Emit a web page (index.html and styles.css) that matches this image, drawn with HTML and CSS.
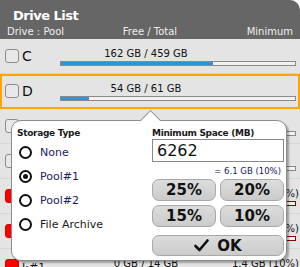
FILE: index.html
```html
<!DOCTYPE html>
<html lang="en">
  <head>
    <meta charset="utf-8" />
    <title>Drive List</title>
    <link rel="stylesheet" href="styles.css">
  </head>
  <body>
    <div class="panel">
      <div class="head">
        <div class="title">Drive List</div>
        <div class="cols">
          <span>Drive : Pool</span>
          <span class="c-free">Free / Total</span>
          <span class="c-min">Minimum</span>
        </div>
      </div>
      <div class="rows">
        <div class="row">
          <span class="check"></span>
          <span class="drive">C</span>
          <div class="info">
            <div class="line"><span class="free">162 GB / 459 GB</span><span class="min"></span></div>
            <div class="bar"><div class="fill" style="width: 65%"></div></div>
          </div>
        </div>
        <div class="row sel">
          <span class="check"></span>
          <span class="drive">D</span>
          <div class="info">
            <div class="line"><span class="free">54 GB / 61 GB</span><span class="min"></span></div>
            <div class="bar"><div class="fill" style="width: 12%"></div></div>
          </div>
        </div>
        <div class="row">
          <span class="check"></span>
          <span class="drive">E</span>
          <div class="info">
            <div class="line"><span class="free"></span><span class="min"></span></div>
            <div class="bar"><div class="fill" style="width: 40%"></div></div>
          </div>
        </div>
        <div class="row">
          <span class="check"></span>
          <span class="drive">F</span>
          <div class="info">
            <div class="line"><span class="free">12 GB / 32 GB</span><span class="min"></span></div>
            <div class="bar"><div class="fill" style="width: 60%"></div></div>
          </div>
        </div>
        <div class="row pool">
          <span class="check"></span>
          <span class="drive">G:#1</span>
          <div class="info">
            <div class="line"><span class="free">3 GB / 14 GB</span><span class="min">1.4 GB (10%)</span></div>
            <div class="bar"><div class="fill" style="width: 78%"></div></div>
          </div>
        </div>
        <div class="row pool">
          <span class="check"></span>
          <span class="drive">H:#1</span>
          <div class="info">
            <div class="line"><span class="free">2 GB / 14 GB</span><span class="min">1.4 GB (10%)</span></div>
            <div class="bar"><div class="fill" style="width: 85%"></div></div>
          </div>
        </div>
        <div class="row pool">
          <span class="check"></span>
          <span class="drive">I:#1</span>
          <div class="info">
            <div class="line"><span class="free">0 GB / 14 GB</span><span class="min">1.4 GB (10%)</span></div>
            <div class="bar"><div class="fill" style="width: 90%"></div></div>
          </div>
        </div>
      </div>

      <div class="popup">
        <div class="col-left">
          <div class="lbl">Storage Type</div>
          <label class="opt"><span class="radio"></span>None</label>
          <label class="opt"><span class="radio on"></span>Pool#1</label>
          <label class="opt"><span class="radio"></span>Pool#2</label>
          <label class="opt dark"><span class="radio"></span>File Archive</label>
        </div>
        <div class="col-right">
          <div class="lbl">Minimum Space (MB)</div>
          <div class="num">6262</div>
          <div class="pct">= 6.1 GB (10%)</div>
          <div class="btns">
            <button>25%</button>
            <button>20%</button>
            <button>15%</button>
            <button>10%</button>
            <button class="ok">
              <svg width="15" height="13" viewBox="0 0 15 13"><path d="M1.5 7 L5.5 11 L13.5 1.5" fill="none" stroke="#111" stroke-width="2.6" stroke-linecap="round" stroke-linejoin="round"/></svg>
              OK
            </button>
          </div>
        </div>
      </div>
    </div>
  </body>
</html>
```

FILE: styles.css
```css
* {
  box-sizing: border-box;
}

body {
  margin: 0;
  background: #fff;
  font-family: "DejaVu Sans", sans-serif;
}

.panel {
  position: relative;
  width: 300px;
  height: 267px;
  overflow: hidden;
  background: #e4e4e4;
  border-top-right-radius: 10px;
}

.head {
  background: #666;
  color: #fff;
  padding: 8px 7px 1px;
}

.title {
  font-weight: bold;
  font-size: 13px;
  line-height: 16px;
  letter-spacing: -0.5px;
  padding-left: 6px;
  margin-bottom: 2px;
}

.cols {
  display: grid;
  grid-template-columns: 53px 180px 1fr;
  font-size: 10px;
  line-height: 12px;
  color: #eee;
  white-space: nowrap;
}

.c-free {
  text-align: center;
}

.c-min {
  text-align: right;
}

.row {
  display: flex;
  height: 35px;
  padding: 10px 4px 0 5px;
  border-bottom: 1px solid #d6d6d6;
}

.row.sel {
  outline: 2px solid #ffa500;
  outline-offset: -2px;
}

.check {
  width: 14px;
  height: 14px;
  flex: none;
  border: 1px solid #8c8c8c;
  border-radius: 3px;
  background: #e8e8e8;
}

.drive {
  width: 41px;
  padding-left: 3px;
  margin-top: -1px;
  font-size: 14px;
  line-height: 16px;
  color: #111;
}

.pool .drive {
  font-size: 11px;
  margin-top: 1px;
}

.pool .check {
  background: #f00;
  border-color: #d00;
}

.info {
  width: 236px;
  margin-top: -1px;
}

.line {
  display: grid;
  grid-template-columns: 172px 1fr;
  height: 12px;
  font-size: 10px;
  line-height: 12px;
  color: #111;
  white-space: nowrap;
}

.free {
  text-align: center;
}

.min {
  text-align: right;
}

.bar {
  height: 5px;
  margin-top: 1px;
  border: 1px solid #8a8a8a;
  background: #f2f2f2;
}

.fill {
  height: 100%;
  background: #2d95d4;
}

.pool .bar {
  border-color: #8b0000;
}

.pool .fill {
  background: #d22;
}

/* popup editor over the list */
.popup {
  position: absolute;
  left: 11px;
  top: 120px;
  width: 276px;
  height: 141px;
  display: grid;
  grid-template-columns: 1fr 132px;
  padding: 6px 2px 0 5px;
  background: #fff;
  border: 1px solid #8c8c8c;
  border-radius: 10px;
  box-shadow: 2px 2px 2px rgba(0, 0, 0, 0.3);
}

.popup::before {
  content: "";
  position: absolute;
  left: 131px;
  top: -8px;
  width: 14px;
  height: 14px;
  background: #fff;
  border-top: 1px solid #8c8c8c;
  border-left: 1px solid #8c8c8c;
  transform: rotate(45deg);
}

.lbl {
  font-weight: bold;
  font-size: 9px;
  line-height: 12px;
  letter-spacing: -0.3px;
  color: #1a1a1a;
  white-space: nowrap;
}

.col-left {
  display: flex;
  flex-direction: column;
}

.col-left .lbl {
  margin-bottom: 1px;
}

.opt {
  display: flex;
  align-items: center;
  height: 24px;
  font-size: 11px;
  color: #1c1c64;
}

.opt.dark {
  color: #1a1a1a;
}

.radio {
  position: relative;
  width: 13px;
  height: 13px;
  margin: 0 8px 0 2px;
  border: 2px solid #111;
  border-radius: 50%;
}

.radio.on::after {
  content: "";
  position: absolute;
  left: 2px;
  top: 2px;
  width: 5px;
  height: 5px;
  border-radius: 50%;
  background: #111;
}

.num {
  height: 23px;
  padding-left: 4px;
  border: 1px solid #888;
  font-size: 16px;
  line-height: 21px;
  color: #111;
}

.pct {
  margin-top: 4px;
  padding-right: 3px;
  font-size: 8.5px;
  line-height: 11px;
  text-align: right;
  color: #20205a;
}

.btns {
  display: grid;
  grid-template-columns: 1fr 1fr;
  gap: 4px;
  margin-top: 2px;
}

button {
  height: 22px;
  padding: 0;
  border: 1px solid #a9a9a9;
  border-radius: 7px;
  background: linear-gradient(#dcdcdc, #cbcbcb);
  font-family: "DejaVu Sans", sans-serif;
  font-weight: bold;
  font-size: 15px;
  color: #111;
}

button.ok {
  grid-column: span 2;
  height: 21px;
  margin-top: 4px;
  display: flex;
  align-items: center;
  justify-content: center;
  gap: 8px;
}
```
